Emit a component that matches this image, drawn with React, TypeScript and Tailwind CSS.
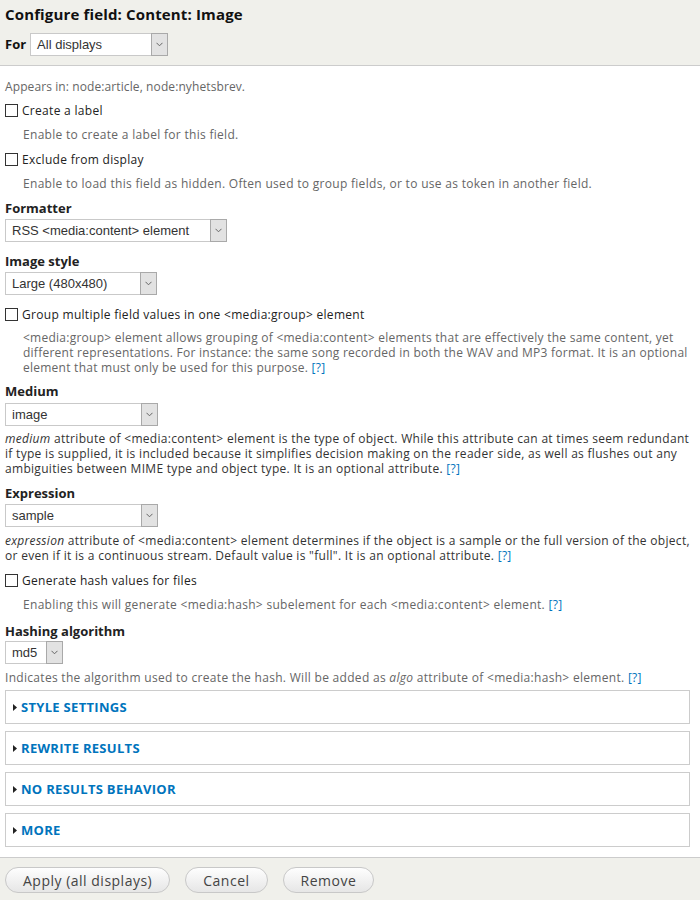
import React from "react";

const FONT = { fontFamily: '"Open Sans", "DejaVu Sans", sans-serif' } as React.CSSProperties;

function Chevron() {
  return (
    <svg width="7" height="5" viewBox="0 0 7 5" fill="none">
      <path d="M0.5 0.8 L3.5 3.8 L6.5 0.8" stroke="#666" strokeWidth="1" />
    </svg>
  );
}

function Select({ value, w }: { value: string; w: string }) {
  return (
    <div className={`${w} flex h-[23px] border border-[#c9c9c9] bg-white`}>
      <div
        className="flex-1 pl-[6px] text-[13px] leading-[21px] text-[#333] whitespace-nowrap overflow-hidden tracking-normal"
        style={{ fontFamily: '"Liberation Sans", Arial, sans-serif' }}
      >
        {value}
      </div>
      <div className="flex w-[17px] items-center justify-center border border-[#a9a9a9] bg-[#e2e2e2] -my-px -mr-px">
        <Chevron />
      </div>
    </div>
  );
}

function Check({ label, mt }: { label: string; mt: string }) {
  return (
    <div className={`${mt} flex h-[15px] items-center gap-[4px]`}>
      <div className="h-[13px] w-[13px] border border-[#333] bg-white" />
      <span className="text-[12px] leading-[15px] text-[#222] tracking-[0.3px]">{label}</span>
    </div>
  );
}

function Q() {
  return <span className="text-[#0074bd]">[?]</span>;
}

function Fieldset({ title, mt }: { title: string; mt: string }) {
  return (
    <div className={`${mt} flex h-[34px] items-center border border-[#ccc] pl-[7px]`}>
      <svg width="4" height="7" viewBox="0 0 4 7" className="mr-[4px]">
        <path d="M0 0 L4 3.5 L0 7 Z" fill="#222" />
      </svg>
      <span className="text-[13px] font-bold text-[#0074bd] tracking-[0.3px]">{title}</span>
    </div>
  );
}

function Label({ text, mt }: { text: string; mt: string }) {
  return (
    <div className={`${mt} text-[13px] font-bold leading-[16px] text-[#222] tracking-[0px]`}>{text}</div>
  );
}

export default function App() {
  return (
    <div className="flex min-h-screen w-[700px] flex-col bg-white" style={FONT}>
      <div className="border-b border-[#ccc] bg-[#f0f0eb] px-[5px] pt-[4px] pb-[9px]">
        <div className="text-[15px] font-bold leading-[20px] text-[#111] tracking-[0.15px]">
          Configure field: Content: Image
        </div>
        <div className="mt-[9px] flex items-center gap-[4px]">
          <span className="text-[13px] font-bold text-[#111]">For</span>
          <Select value="All displays" w="w-[138px]" />
        </div>
      </div>

      <div className="pl-[5px] pr-[10px] pb-[10px] text-[12px] leading-[15px] tracking-[0.3px]">
        <div className="mt-[13px] text-[#666] tracking-[0.1px]">Appears in: node:article, node:nyhetsbrev.</div>

        <Check label="Create a label" mt="mt-[9px]" />
        <div className="mt-[9px] pl-[18px] text-[#666]">Enable to create a label for this field.</div>

        <Check label="Exclude from display" mt="mt-[10px]" />
        <div className="mt-[9px] pl-[18px] text-[#666]">
          Enable to load this field as hidden. Often used to group fields, or to use as token in another field.
        </div>

        <Label text="Formatter" mt="mt-[9px]" />
        <div className="mt-[3px]">
          <Select value="RSS <media:content> element" w="w-[222px]" />
        </div>

        <Label text="Image style" mt="mt-[11px]" />
        <div className="mt-[3px]">
          <Select value="Large (480x480)" w="w-[152px]" />
        </div>

        <Check label="Group multiple field values in one <media:group> element" mt="mt-[12px]" />
        <div className="mt-[8px] pl-[18px] text-[#666] whitespace-nowrap tracking-[0.25px]">
          &lt;media:group&gt; element allows grouping of &lt;media:content&gt; elements that are effectively the same content, yet
          <br />
          different representations. For instance: the same song recorded in both the WAV and MP3 format. It is an optional
          <br />
          element that must only be used for this purpose. <Q />
        </div>

        <Label text="Medium" mt="mt-[8px]" />
        <div className="mt-[4px]">
          <Select value="image" w="w-[153px]" />
        </div>
        <div className="mt-[5px] text-[#333] whitespace-nowrap">
          <em>medium</em> attribute of &lt;media:content&gt; element is the type of object. While this attribute can at times seem redundant
          <br />
          if type is supplied, it is included because it simplifies decision making on the reader side, as well as flushes out any
          <br />
          ambiguities between MIME type and object type. It is an optional attribute. <Q />
        </div>

        <Label text="Expression" mt="mt-[9px]" />
        <div className="mt-[3px]">
          <Select value="sample" w="w-[153px]" />
        </div>
        <div className="mt-[6px] text-[#333] whitespace-nowrap">
          <em>expression</em> attribute of &lt;media:content&gt; element determines if the object is a sample or the full version of the object,
          <br />
          or even if it is a continuous stream. Default value is "full". It is an optional attribute. <Q />
        </div>

        <Check label="Generate hash values for files" mt="mt-[10px]" />
        <div className="mt-[9px] pl-[18px] text-[#666]">
          Enabling this will generate &lt;media:hash&gt; subelement for each &lt;media:content&gt; element. <Q />
        </div>

        <Label text="Hashing algorithm" mt="mt-[11px]" />
        <div className="mt-[2px]">
          <Select value="md5" w="w-[58px]" />
        </div>
        <div className="mt-[6px] text-[#666] whitespace-nowrap">
          Indicates the algorithm used to create the hash. Will be added as <em>algo</em> attribute of &lt;media:hash&gt; element. <Q />
        </div>

        <Fieldset title="STYLE SETTINGS" mt="mt-[5px]" />
        <Fieldset title="REWRITE RESULTS" mt="mt-[7px]" />
        <Fieldset title="NO RESULTS BEHAVIOR" mt="mt-[7px]" />
        <Fieldset title="MORE" mt="mt-[7px]" />
      </div>

      <div className="flex flex-1 items-start gap-[15px] border-t border-[#ccc] bg-[#f0f0eb] px-[5px] pt-[9px]">
        {["Apply (all displays)", "Cancel", "Remove"].map((b) => (
          <div
            key={b}
            className="flex h-[26px] items-center rounded-full border border-[#c8c8c8] bg-gradient-to-b from-[#fefefe] to-[#e6e6e6] px-[17px] text-[14px] text-[#444] tracking-[0.5px]"
          >
            {b}
          </div>
        ))}
      </div>
    </div>
  );
}
